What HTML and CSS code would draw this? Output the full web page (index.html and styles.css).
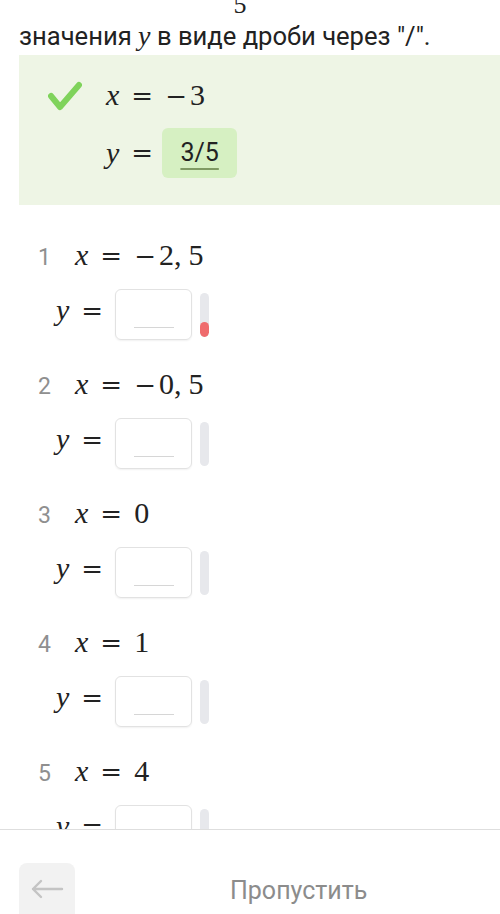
FILE: index.html
```html
<!DOCTYPE html>
<html lang="ru">
<head>
    <meta charset="UTF-8">
    <meta name="viewport" content="width=device-width, initial-scale=1.0">
    <title>Задание</title>
    <link rel="stylesheet" href="styles.css">
</head>
<body>
    <div class="screen">
        <div class="content">
            <div class="frac-tail"><span>5</span></div>
            <p class="prompt">значения <i class="mi">y</i> в виде дроби через "/".</p>

            <div class="solved">
                <svg class="check" width="34" height="30" viewBox="0 0 34 30">
                    <path d="M3 15 L12 26 L31 4" fill="none" stroke="#7fd35b" stroke-width="6" stroke-linecap="round" stroke-linejoin="round"/>
                </svg>
                <div class="solved-body">
                    <div class="math"><i>x</i><span class="rel">=</span><span class="op">−</span>3</div>
                    <div class="math answer-row"><i>y</i><span class="rel">=</span><span class="answer">3/5</span></div>
                </div>
            </div>

            <ol class="tasks">
                <li class="task">
                    <div class="task-head"><span class="num">1</span><span class="math"><i>x</i><span class="rel">=</span><span class="op">−</span>2,<span class="sp"></span>5</span></div>
                    <div class="task-input">
                        <span class="math"><i>y</i><span class="rel">=</span></span>
                        <span class="field"><span class="line"></span></span>
                        <span class="meter"><span class="fill" style="height: 34%"></span></span>
                    </div>
                </li>
                <li class="task">
                    <div class="task-head"><span class="num">2</span><span class="math"><i>x</i><span class="rel">=</span><span class="op">−</span>0,<span class="sp"></span>5</span></div>
                    <div class="task-input">
                        <span class="math"><i>y</i><span class="rel">=</span></span>
                        <span class="field"><span class="line"></span></span>
                        <span class="meter"></span>
                    </div>
                </li>
                <li class="task">
                    <div class="task-head"><span class="num">3</span><span class="math"><i>x</i><span class="rel">=</span>0</span></div>
                    <div class="task-input">
                        <span class="math"><i>y</i><span class="rel">=</span></span>
                        <span class="field"><span class="line"></span></span>
                        <span class="meter"></span>
                    </div>
                </li>
                <li class="task">
                    <div class="task-head"><span class="num">4</span><span class="math"><i>x</i><span class="rel">=</span>1</span></div>
                    <div class="task-input">
                        <span class="math"><i>y</i><span class="rel">=</span></span>
                        <span class="field"><span class="line"></span></span>
                        <span class="meter"></span>
                    </div>
                </li>
                <li class="task">
                    <div class="task-head"><span class="num">5</span><span class="math"><i>x</i><span class="rel">=</span>4</span></div>
                    <div class="task-input">
                        <span class="math"><i>y</i><span class="rel">=</span></span>
                        <span class="field"><span class="line"></span></span>
                        <span class="meter"></span>
                    </div>
                </li>
            </ol>
        </div>

        <footer class="bottom-bar">
            <button class="back" type="button" aria-label="Назад">
                <svg width="34" height="20" viewBox="0 0 34 20">
                    <path d="M32 10 H3 M11 2 L3 10 L11 18" fill="none" stroke="#c4c4c4" stroke-width="2.4" stroke-linecap="round" stroke-linejoin="round"/>
                </svg>
            </button>
            <span class="skip">Пропустить</span>
        </footer>
    </div>
</body>
</html>
```

FILE: styles.css
```css
body {
    margin: 0;
    font-family: Roboto, "Noto Sans", sans-serif;
    color: #222;
    background-color: #fff;
}
.screen {
    width: 500px;
    height: 914px;
    display: flex;
    flex-direction: column;
    overflow: hidden;
}
.content {
    height: 829px;
    overflow: hidden;
    border-bottom: 1px solid #dedede;
    flex-shrink: 0;
}
.frac-tail {
    height: 17px;
    overflow: hidden;
    text-align: center;
    font-family: "Liberation Serif", "DejaVu Serif", serif;
    font-size: 26px;
    line-height: 26px;
    padding-right: 20px;
}
.frac-tail span {
    display: block;
    margin-top: -8px;
}
.prompt {
    margin: 0;
    padding-left: 19px;
    font-size: 25.6px;
    line-height: 38px;
    white-space: nowrap;
}
.mi {
    font-family: "Liberation Serif", "DejaVu Serif", serif;
    font-size: 28px;
}
.math {
    font-family: "Liberation Serif", "DejaVu Serif", serif;
    font-size: 30px;
    white-space: nowrap;
}
.math i {
    font-style: italic;
}
.rel,
.op {
    font-family: "DejaVu Serif", serif;
    font-weight: 300;
    font-size: 26px;
}
.rel {
    margin: 0 12px 0 12px;
}
.op {
    margin-right: 3px;
}
.sp {
    display: inline-block;
    width: 7px;
}
.solved {
    margin: 0 0 0 19px;
    height: 150px;
    background-color: #eef5e5;
    display: flex;
    padding: 23px 0 0 29px;
    box-sizing: border-box;
}
.check {
    margin-top: 3px;
    flex-shrink: 0;
}
.solved-body {
    margin-left: 24px;
    display: flex;
    flex-direction: column;
    gap: 16px;
}
.answer-row {
    display: flex;
    align-items: center;
}
.answer-row .rel {
    margin-right: 9px;
}
.answer {
    display: inline-block;
    width: 75px;
    height: 50px;
    line-height: 50px;
    border-radius: 6px;
    background-color: #d6f0c2;
    text-align: center;
    font-family: Roboto, "Noto Sans", sans-serif;
    font-size: 25px;
    text-decoration: underline;
    text-decoration-color: #7f9a63;
    text-underline-offset: 7px;
    color: #222;
}
.tasks {
    list-style: none;
    margin: 33px 0 0;
    padding: 0;
}
.task {
    height: 129px;
}
.task-head {
    display: flex;
    align-items: baseline;
    height: 40px;
    padding-left: 38px;
}
.num {
    width: 37px;
    font-size: 23px;
    color: #8f8f8f;
}
.task-input {
    display: flex;
    align-items: center;
    padding-left: 56px;
    margin-top: 11px;
}
.task-input .math {
    margin-bottom: 9px;
}
.task-input .rel {
    margin-right: 12px;
}
.field {
    width: 77px;
    height: 51px;
    border: 1px solid #e2e2e2;
    border-radius: 6px;
    box-sizing: border-box;
    box-shadow: 0 1px 2px rgba(0, 0, 0, 0.06);
    display: flex;
    justify-content: center;
    align-items: flex-end;
    padding-bottom: 11px;
}
.line {
    width: 40px;
    height: 1px;
    background-color: #d6d6d6;
}
.meter {
    width: 9px;
    height: 44px;
    margin-left: 8px;
    border-radius: 5px;
    background-color: #e7e8ec;
    display: flex;
    flex-direction: column;
    justify-content: flex-end;
    overflow: hidden;
}
.fill {
    background-color: #ef6b6d;
    border-radius: 5px;
}
.bottom-bar {
    flex: 1;
    display: flex;
    align-items: flex-start;
    padding: 33px 0 0 19px;
}
.back {
    width: 56px;
    height: 60px;
    border: none;
    border-radius: 8px;
    background-color: #f2f2f2;
    display: flex;
    align-items: center;
    justify-content: center;
    padding: 0 0 8px;
    cursor: pointer;
}
.skip {
    margin-left: 155px;
    margin-top: 13px;
    font-size: 25px;
    color: #8c8c8c;
}
```
